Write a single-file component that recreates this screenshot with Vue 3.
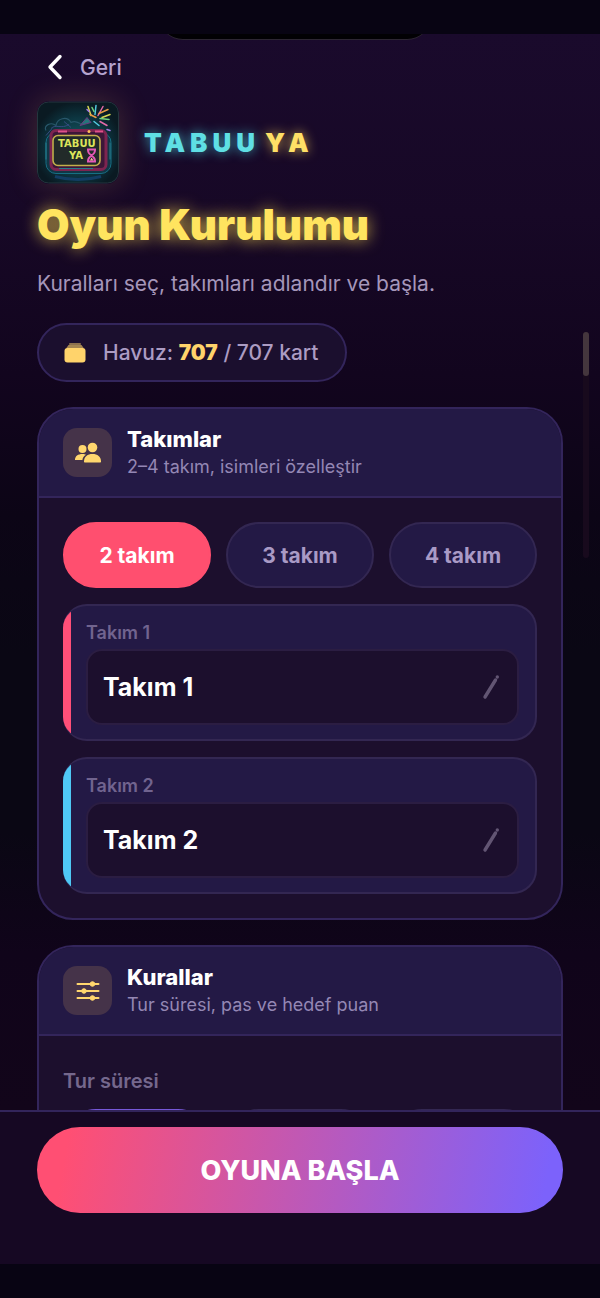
<script setup>
import { ref } from 'vue'

const teamCount = ref(2)
const counts = [2, 3, 4]
const teams = ref([
  { id: 1, name: 'Takım 1', tone: 'pink' },
  { id: 2, name: 'Takım 2', tone: 'blue' },
])
const durations = [60, 90, 120]
const duration = ref(60)
</script>

<template>
  <div class="screen">
    <div class="status-bar"></div>

    <main class="content">
      <div class="notch"></div>
      <div class="scrollbar"><div class="thumb"></div></div>

      <button class="back" type="button">
        <svg width="16" height="26" viewBox="0 0 16 26" fill="none" stroke="#fff" stroke-width="3.4" stroke-linecap="round" stroke-linejoin="round" aria-hidden="true">
          <path d="M13 2.5 3 13l10 10.5" />
        </svg>
        <span>Geri</span>
      </button>

      <div class="brand">
        <svg class="logo" viewBox="0 0 82 82" role="img" aria-label="Tabuu Ya">
          <defs>
            <radialGradient id="glow" cx="50%" cy="55%" r="55%">
              <stop offset="0" stop-color="#17606a" />
              <stop offset="0.65" stop-color="#0c3540" />
              <stop offset="1" stop-color="#0a1a22" />
            </radialGradient>
          </defs>
          <rect x="0.5" y="0.5" width="81" height="81" rx="11" fill="url(#glow)" stroke="#24363e" />
          <path d="M9 29c-3-5 5-9 10-5 1-7 11-10 15-3 5-3 8 1 11 2" fill="none" stroke="#28576a" stroke-width="1.2" />
          <path d="M14 27c5-5 10 1 18-4M27 20l7 6M9 34l6-7" fill="none" stroke="#364b80" />
          <path d="M43 24l7-8 4 5z" fill="#23767a" stroke="#6c387f" />
          <g fill="none" stroke-linecap="round" stroke-width="1.5">
            <path d="M54 14l-3-9M65 16l8-3" stroke="#d8d553" />
            <path d="M58 13l1-9M57 20l5 4" stroke="#52c9df" />
            <path d="M61 14l5-9M63 20l7 4" stroke="#e36aa9" />
            <path d="M57 10l-2-4M63 17l9 1" stroke="#76d37d" />
            <path d="M62 12l9-4M59 16l-6-3" stroke="#e79a45" />
            <path d="M52 10l-2-2M70 28l3 1" stroke="#a77be7" />
          </g>
          <rect x="9" y="31" width="65" height="41" rx="10" fill="#123646" stroke="#176f84" />
          <rect x="14" y="29" width="55" height="39" rx="5" fill="#3c1738" stroke="#7d2450" stroke-width="3" />
          <path d="M21 30h9M58 30h8" stroke="#e0508a" stroke-width="2" />
          <circle cx="52" cy="30" r="1.5" fill="#ffbd57" />
          <rect x="16" y="34" width="47" height="30" rx="5" fill="#222a29" stroke="#c2af4b" stroke-width="1.6" />
          <text class="logo-text" x="21" y="45">TABUU</text>
          <text class="logo-text" x="32" y="57">YA</text>
          <path d="M50 48h9M50 60h9M51 49c0 5 7 5 7 10M58 49c0 5-7 5-7 10" fill="none" stroke="#e457b7" stroke-width="1.8" />
          <path d="M53 59l1.500-3 2 3z" fill="#f0b0a0" />
          <path d="M22 67h34M9 41v17M73 41v17" stroke="#247c8d" />
          <path d="M18 75c15 4 31 4 46 0" fill="none" stroke="#123e64" stroke-width="3" />
        </svg>
        <div class="brand-name"><span class="cyan">TABUU</span><span class="gold">YA</span></div>
      </div>

      <h1>Oyun Kurulumu</h1>
      <p class="lead">Kuralları seç, takımları adlandır ve başla.</p>

      <div class="pool">
        <svg width="22" height="20" viewBox="0 0 22 20" fill="#ffd36b" aria-hidden="true">
          <rect x="5" y="0" width="12" height="2" rx="1" opacity="0.5" />
          <path d="M4.500 2h13l2.500 3.500H2z" opacity="0.6" />
          <rect x="0.500" y="5" width="21" height="14.500" rx="3" />
        </svg>
        <span>Havuz: <strong>707</strong> / 707 kart</span>
      </div>

      <section class="card">
        <header class="card-head">
          <span class="badge">
            <svg width="28" height="22" viewBox="0 0 28 22" fill="#ffd76e" aria-hidden="true">
              <circle cx="8.500" cy="7" r="4" />
              <path d="M1 18c0-4 3-6 7.500-6 1.500 0 2.500.2 3.500.8-2.200 1.400-3.400 3-3.600 5.200z" />
              <circle cx="18.500" cy="5.500" r="4.800" />
              <path d="M10 19.500c0-5 3.500-7.500 8.500-7.500s8.500 2.500 8.500 7.500c0 .6-.4 1-1 1H11c-.6 0-1-.4-1-1z" />
            </svg>
          </span>
          <div>
            <h2>Takımlar</h2>
            <p>2–4 takım, isimleri özelleştir</p>
          </div>
        </header>
        <div class="card-body">
          <div class="chips">
            <button
              v-for="n in counts"
              :key="n"
              type="button"
              class="chip"
              :class="{ active: teamCount === n }"
              :aria-pressed="teamCount === n"
              @click="teamCount = n"
            >{{ n }} takım</button>
          </div>
          <div v-for="team in teams" :key="team.id" class="team" :class="team.tone">
            <label :for="'team-' + team.id">Takım {{ team.id }}</label>
            <div class="field">
              <input :id="'team-' + team.id" v-model="team.name" type="text" />
              <svg width="18" height="26" viewBox="0 0 18 26" fill="none" stroke="#625573" stroke-linecap="round" aria-hidden="true">
                <path d="M3 23 13.500 6" stroke-width="3.400" />
                <path d="M15.300 3v.1" stroke-width="3.400" />
              </svg>
            </div>
          </div>
        </div>
      </section>

      <section class="card">
        <header class="card-head">
          <span class="badge">
            <svg width="24" height="22" viewBox="0 0 24 22" fill="#ffd76e" stroke="#ffd76e" stroke-linecap="round" aria-hidden="true">
              <path d="M1.500 4h21M1.500 11h21M1.500 18h21" stroke-width="2" />
              <circle cx="16.500" cy="4" r="2.300" />
              <circle cx="8" cy="11" r="2.300" />
              <circle cx="16.500" cy="18" r="2.300" />
            </svg>
          </span>
          <div>
            <h2>Kurallar</h2>
            <p>Tur süresi, pas ve hedef puan</p>
          </div>
        </header>
        <div class="card-body">
          <h3>Tur süresi</h3>
          <div class="chips">
            <button
              v-for="d in durations"
              :key="d"
              type="button"
              class="chip"
              :class="{ selected: duration === d }"
              :aria-label="d + ' saniye'"
              @click="duration = d"
            ></button>
          </div>
        </div>
      </section>
    </main>

    <footer class="footer">
      <button class="start" type="button">OYUNA BAŞLA</button>
    </footer>
    <div class="home-bar"></div>
  </div>
</template>

<style>
body {
  margin: 0;
  background: #080413;
}
</style>

<style scoped>
* {
  box-sizing: border-box;
}
.screen {
  display: flex;
  flex-direction: column;
  height: 100vh;
  overflow: hidden;
  font-family: Inter, "Liberation Sans", sans-serif;
  color: #fff;
  background: #080413;
}
button,
input {
  font-family: inherit;
}
h1, h2, h3, p {
  margin: 0;
}
.status-bar,
.home-bar {
  flex: none;
  height: 34px;
  background: #080413;
}
.content {
  position: relative;
  flex: 1;
  min-height: 0;
  overflow: hidden;
  padding: 16px 37px 0;
  background: linear-gradient(180deg, #1a0a2c 0, #170826 180px, #12051e 340px, #0c0516 480px, #0a0714 620px, #0a0714 800px, #10041a 920px, #12051a 100%);
}
.notch {
  position: absolute;
  top: -30px;
  left: 50%;
  width: 272px;
  height: 36px;
  margin-left: -141px;
  border-bottom: 1px solid #2d2633;
  border-radius: 0 0 24px 24px;
  background: #020104;
}
.scrollbar {
  position: absolute;
  top: 298px;
  right: 11px;
  width: 6px;
  height: 226px;
  border-radius: 3px;
  background: #180a1d;
}
.thumb {
  height: 44px;
  border-radius: 3px;
  background: #44363d;
}
.back {
  display: flex;
  align-items: center;
  gap: 17px;
  height: 34px;
  padding: 0 10px;
  border: 0;
  background: none;
  color: #b5a3cf;
  font-size: 21px;
  font-weight: 500;
}
.brand {
  display: flex;
  align-items: center;
  gap: 25px;
  margin-top: 17px;
}
.logo {
  width: 82px;
  height: 83px;
  border-radius: 12px;
  box-shadow: 0 0 32px rgba(255, 190, 100, 0.2);
}
.logo-text {
  font-family: "DejaVu Sans", sans-serif;
  font-size: 10px;
  font-weight: 700;
  fill: #dce65b;
}
.brand-name {
  display: flex;
  gap: 5px;
  font-size: 26px;
  line-height: 30px;
  font-weight: 900;
  letter-spacing: 5px;
}
.cyan {
  color: #5fdfe4;
  text-shadow: 0 0 12px rgba(70, 215, 230, 0.75);
}
.gold {
  color: #ffe066;
  text-shadow: 0 0 12px rgba(255, 215, 90, 0.75);
}
h1 {
  margin-top: 16px;
  font-size: 42px;
  line-height: 50px;
  font-weight: 900;
  color: #ffe45f;
  text-shadow: 0 0 16px rgba(255, 220, 80, 0.8);
}
.lead {
  margin-top: 20px;
  font-size: 21px;
  line-height: 28px;
  color: #a596ba;
}
.pool {
  display: inline-flex;
  align-items: center;
  gap: 17px;
  height: 59px;
  margin-top: 25px;
  padding: 0 26px 0 25px;
  border: 2px solid #33255b;
  border-radius: 30px;
  background: #1b0f2e;
  color: #ac9cc3;
  font-size: 21px;
  font-weight: 500;
}
.pool strong {
  font-weight: 900;
  color: #ffd36b;
}
.card {
  margin-top: 25px;
  border: 2px solid #33255b;
  border-radius: 36px;
  background: #1c0f2d;
  overflow: hidden;
}
.card-head {
  display: flex;
  align-items: center;
  gap: 15px;
  height: 89px;
  padding: 0 24px;
  border-bottom: 2px solid #33255b;
  background: #231945;
}
.badge {
  display: flex;
  align-items: center;
  justify-content: center;
  width: 49px;
  height: 49px;
  border-radius: 14px;
  background: #453349;
}
h2 {
  font-size: 22px;
  line-height: 27px;
  font-weight: 800;
}
.card-head p {
  font-size: 18px;
  line-height: 27px;
  color: #9487b4;
}
.card-body {
  display: flex;
  flex-direction: column;
  gap: 16px;
  padding: 24px;
}
.chips {
  display: grid;
  grid-template-columns: repeat(3, 1fr);
  gap: 15px;
}
.chip {
  height: 66px;
  border: 2px solid #332752;
  border-radius: 33px;
  background: #231945;
  color: #a99ac5;
  font-size: 21px;
  font-weight: 700;
}
.chip.active {
  border-color: #ff4f6f;
  background: #ff4f6f;
  color: #fff;
}
.chip.selected {
  border-color: #7658d8;
  background: #6f51cf;
}
.team {
  position: relative;
  overflow: hidden;
  padding: 15px 16px 14px 23px;
  border: 2px solid #332752;
  border-left: 0;
  border-radius: 24px;
  background: #231945;
}
.team::before {
  content: "";
  position: absolute;
  top: 0;
  bottom: 0;
  left: 0;
  width: 8px;
}
.team.pink::before {
  background: #ff4f78;
}
.team.blue::before {
  background: #4fc8f5;
}
.team label {
  display: block;
  font-size: 18px;
  line-height: 24px;
  font-weight: 600;
  color: #71648f;
}
.field {
  display: flex;
  align-items: center;
  height: 76px;
  margin-top: 4px;
  padding: 0 17px 0 15px;
  border: 2px solid #2b1d42;
  border-radius: 16px;
  background: #1c0f2d;
}
.field input {
  flex: 1;
  min-width: 0;
  padding: 0;
  border: 0;
  outline: 0;
  background: none;
  color: #fff;
  font-size: 25px;
  font-weight: 700;
}
h3 {
  margin-top: 9px;
  font-size: 20px;
  line-height: 24px;
  font-weight: 600;
  color: #75688d;
}
.footer {
  flex: none;
  padding: 15px 37px 51px;
  border-top: 2px solid #33255b;
  background: #160823;
}
.start {
  display: block;
  width: 100%;
  height: 86px;
  border: 0;
  border-radius: 43px;
  background: linear-gradient(100deg, #ff4f73 6%, #7c62fb 96%);
  color: #fff;
  font-size: 27px;
  font-weight: 800;
}
</style>
